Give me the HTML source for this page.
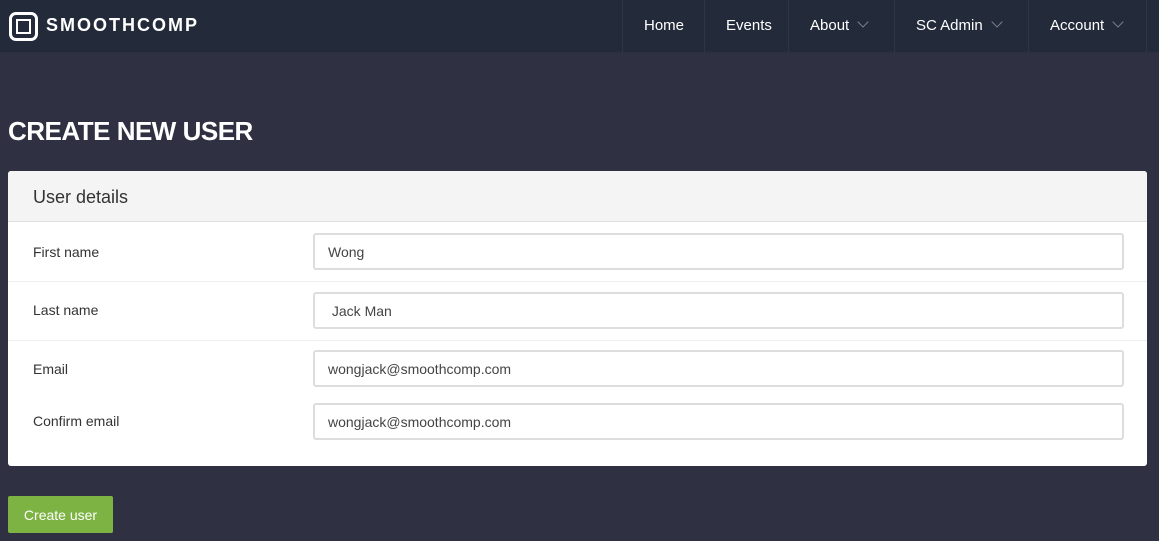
<!DOCTYPE html>
<html><head><style>
*{box-sizing:border-box;margin:0;padding:0}
body{width:1159px;height:541px;overflow:hidden;background:#2f3142;font-family:"Liberation Sans",sans-serif;position:relative}
.nav{position:absolute;left:0;top:0;width:1159px;height:53px;background:#232a3a;border-bottom:1px solid #2a3040}
.logo{position:absolute;left:9px;top:12px;width:29px;height:29px;border:3px solid #fff;border-radius:7px}
.logo:after{content:"";position:absolute;left:4px;top:4px;width:15px;height:15px;box-sizing:border-box;border:2.5px solid #fff}
.brand{position:absolute;left:46px;top:15px;color:#fff;font-size:18px;font-weight:bold;letter-spacing:2px}
.item{position:absolute;top:0;height:53px;border-left:1px solid #2e3546;color:#fff;font-size:15px;line-height:52px;padding-left:21px}
.chev{display:inline-block;width:8px;height:8px;border-right:1px solid #7a8090;border-bottom:1px solid #7a8090;transform:rotate(45deg);margin-left:10px;position:relative;top:-4px}
h1{position:absolute;left:8px;top:116px;color:#fff;font-size:26px;font-weight:bold;letter-spacing:-0.5px}
.card{position:absolute;left:8px;top:171px;width:1139px;height:295px;background:#fff;border-radius:3px;overflow:hidden}
.hd{height:51px;background:#f4f4f4;border-bottom:1px solid #ddd;padding-left:25px;line-height:52px;font-size:18px;color:#333}
.row{position:absolute;left:0;width:1139px}
.lbl{position:absolute;left:25px;font-size:14px;color:#333}
.inp{position:absolute;left:305px;width:811px;height:37px;border:2px solid #ddd;border-radius:3px;padding-left:13px;line-height:34px;font-size:14px;color:#444}
.btn{position:absolute;left:8px;top:496px;width:105px;height:37px;background:#7cb342;color:#fff;font-size:14px;line-height:38px;text-align:center;border-radius:2px}
</style></head><body>
<div class="nav">
<div class="logo"></div><div class="brand">SMOOTHCOMP</div>
<div class="item" style="left:622px;width:83px">Home</div>
<div class="item" style="left:704px;width:85px">Events</div>
<div class="item" style="left:788px;width:107px">About<span class="chev"></span></div>
<div class="item" style="left:894px;width:135px">SC Admin<span class="chev"></span></div>
<div class="item" style="left:1028px;width:119px;border-right:1px solid #2e3546">Account<span class="chev"></span></div>
</div>
<h1>CREATE NEW USER</h1>
<div class="card">
<div class="hd">User details</div>
<div class="lbl" style="top:73px">First name</div><div class="inp" style="top:62px">Wong</div>
<div class="row" style="top:110px;border-top:1px solid #eee"></div>
<div class="lbl" style="top:131px">Last name</div><div class="inp" style="top:121px">&nbsp;Jack Man</div>
<div class="row" style="top:169px;border-top:1px solid #eee"></div>
<div class="lbl" style="top:190px">Email</div><div class="inp" style="top:179px">wongjack@smoothcomp.com</div>
<div class="lbl" style="top:242px">Confirm email</div><div class="inp" style="top:232px">wongjack@smoothcomp.com</div>
</div>
<div class="btn">Create user</div>
</body></html>
